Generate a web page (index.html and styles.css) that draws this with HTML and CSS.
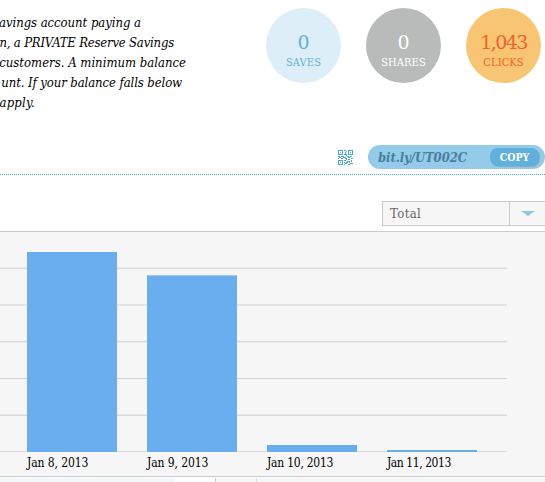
FILE: index.html
```html
<!DOCTYPE html>
<html lang="en">
<head>
<meta charset="utf-8">
<title>Link statistics</title>
<link rel="stylesheet" href="styles.css">
</head>
<body>
<header class="summary">
  <div class="description">
    <p class="l1">avings account paying a</p>
    <p class="l2">n, a PRIVATE Reserve Savings</p>
    <p class="l3">customers. A minimum balance</p>
    <p class="l4">unt. If your balance falls below</p>
    <p class="l5">apply.</p>
  </div>
  <div class="stats">
    <div class="stat saves"><b>0</b><span>SAVES</span></div>
    <div class="stat shares"><b>0</b><span>SHARES</span></div>
    <div class="stat clicks"><b>1,043</b><span>CLICKS</span></div>
  </div>
</header>
<div class="linkbar">
  <svg class="qr" viewBox="0 0 15 15" shape-rendering="crispEdges"><path fill="none" stroke="#4aa6cf" d="M.5.5h4v4h-4zM10.5.5h4v4h-4zM.5 10.5h4v4h-4zM2 2.5h1M12 2.5h1M2 12.5h1M6 .5h2M8 1.5h1M7.5 2v2M6 4.5h2M8.5 4v2M0 6.5h2M3 6.5h3M1 7.5h2M5 7.5h3M0 8.5h1M3 8.5h2M7 8.5h2M9 6.5h2M12 6.5h2M10 7.5h2M13 8.5h2M10 9.5h2M6 10.5h2M8 9.5h1M9 11.5h3M13.5 10v2M6 12.5h1M8 12.5h2M11 12.5h1M7 13.5h2M12 13.5h3M6 14.5h1M10 14.5h2"/></svg>
  <div class="short"><span class="url">bit.ly/UT002C</span><span class="copy">COPY</span></div>
</div>
<div class="toolbar"><div class="select"><span class="value">Total</span><span class="toggle"><svg width="14" height="5" viewBox="0 0 14 5"><path d="M0 0h14L7 5z" fill="#93c5e1"/></svg></span></div></div>
<main class="chart">
  <div class="plot">
    <div class="bar b1"></div><div class="bar b2"></div><div class="bar b3"></div><div class="bar b4"></div>
  </div>
  <div class="labels"><span class="d1">Jan 8, 2013</span><span class="d2">Jan 9, 2013</span><span class="d3">Jan 10, 2013</span><span class="d4">Jan 11, 2013</span></div>
</main>
<footer class="tabs"><div class="tint"></div><div class="gap"></div><div class="tab"></div><div class="rest"></div></footer>
</body>
</html>
```
FILE: styles.css
```css
* { box-sizing: border-box; }
body { margin: 0; width: 545px; height: 482px; overflow: hidden; background: #fff; font-family: "DejaVu Serif Condensed", "DejaVu Serif", serif; color: #000; }
p { margin: 0; }
.summary { display: flex; height: 145px; }
.description { width: 266px; padding-top: 13px; font: italic 13px/20px "DejaVu Serif Condensed", "DejaVu Serif", serif; font-stretch: condensed; }
.description p { height: 20px; display: flex; justify-content: flex-end; white-space: nowrap; }
.l1 { width: 141px; letter-spacing: -.05px; }
.l2 { width: 174px; letter-spacing: -.2px; }
.l3 { width: 186px; letter-spacing: 0; }
.l4 { width: 182px; letter-spacing: -.1px; }
.l5 { width: 35px; letter-spacing: .2px; }
.stats { display: flex; gap: 25px; padding-top: 8px; }
.stat { width: 75px; height: 75px; border-radius: 50%; display: flex; flex-direction: column; align-items: center; padding-top: 23px; white-space: nowrap; font-stretch: condensed; }
.stat b { font-family: "DejaVu Serif", serif; font-stretch: normal; font-weight: 400; font-size: 19px; line-height: 22px; }
.stat span { font-size: 11px; line-height: 19px; letter-spacing: .1px; }
.saves { background: #deeef8; color: #5fb1de; }
.shares { background: #b8bbba; color: #fff; }
.clicks { background: #f8c572; color: #f2622a; }
.clicks b { letter-spacing: -1.6px; }
.linkbar { height: 30px; border-bottom: 1px dotted #4aa9d2; display: flex; padding-left: 338px; }
.qr { width: 15px; height: 15px; margin-top: 5px; flex: none; }
.short { width: 177px; height: 24px; margin-left: 15px; flex: none; border-radius: 12px; background: #94cbe9; display: flex; align-items: center; padding-left: 10px; }
.url { width: 112px; font-style: italic; font-weight: 700; font-size: 13px; letter-spacing: -.1px; color: #467f9c; font-stretch: condensed; white-space: nowrap; }
.copy { width: 49px; height: 18px; border-radius: 8px; background: #5fb0dd; box-shadow: 1px 1px 1px #8aa9b8; color: #fff; font-size: 10.5px; line-height: 19px; font-weight: 700; text-align: center; font-stretch: condensed; }
.toolbar { height: 56px; padding: 26px 0 0 382px; }
.select { height: 25px; border: 1px solid #c8cacb; border-right: 0; background: #f6f6f6; display: flex; }
.value { width: 126px; padding-left: 7px; font-size: 13px; line-height: 23px; letter-spacing: .4px; color: #666; font-stretch: condensed; }
.toggle { flex: 1; border-left: 1px solid #c8cacb; display: flex; align-items: center; justify-content: center; }
.chart { height: 246px; background: #f6f6f6; border-top: 1px solid #c8cacb; border-bottom: 1px solid #c8cacb; }
.plot { width: 507px; height: 220px; display: flex; align-items: flex-end; gap: 30px; padding-left: 27px; background: linear-gradient(to bottom, transparent 35px, #e9e9e9 35px 36px, #dadada 36px 37px, transparent 37px 72px, #e3e3e3 72px 74px, transparent 74px 109px, #d8d8d8 109px 110px, #ebebeb 110px 111px, transparent 111px 146px, #d2d2d2 146px 147px, transparent 147px 182px, #e9e9e9 182px 183px, #dadada 183px 184px, transparent 184px 219px, #dadada 219px); }
.bar { width: 90px; background: #6baef0; }
.b1 { height: 200px; }
.b2 { height: 177px; border-top: 1px solid #98c7f5; }
.b3 { height: 7px; }
.b4 { height: 2px; }
.labels { display: flex; gap: 30px; padding-left: 27px; font-size: 12px; line-height: 22px; font-stretch: condensed; }
.labels span { width: 90px; white-space: nowrap; letter-spacing: -.1px; }
.labels .d3 { letter-spacing: -.25px; }
.labels .d4 { letter-spacing: -.45px; }
.tabs { height: 5px; padding-top: 1px; display: flex; }
.tint { width: 175px; background: #f2f8fa; }
.gap { width: 40px; }
.tab { width: 42px; background: #f6f6f6; border-left: 1px solid #c8cacb; border-right: 1px solid #dedede; }
.rest { flex: 1; background: #f6f6f6; }
```
